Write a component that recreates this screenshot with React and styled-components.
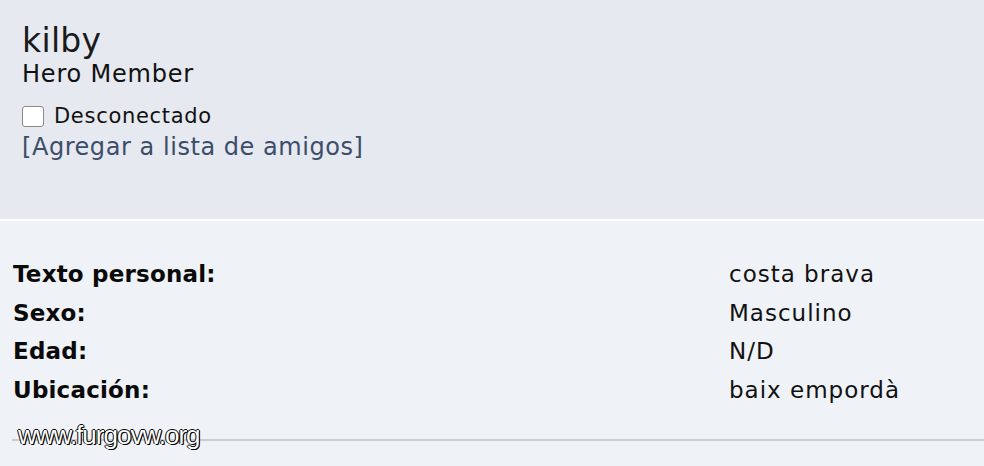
import { Fragment } from "react";
import styled, { createGlobalStyle } from "styled-components";

const GlobalStyle = createGlobalStyle`
	html, body {
		margin: 0;
		padding: 0;
		background: #eff2f6;
	}
	body {
		font-family: "DejaVu Sans", Verdana, sans-serif;
		color: #111;
	}
`;

const Page = styled.div`
	position: relative;
	width: 984px;
	height: 466px;
	overflow: hidden;
	background: #eff2f6;
`;

const TopPanel = styled.div`
	height: 221px;
	box-sizing: border-box;
	padding: 22px 22px 0;
	background: #e6e9ef;
	border-bottom: 2px solid #ffffff;
`;

const Name = styled.div`
	font-size: 33px;
	line-height: 38px;
	letter-spacing: 0.3px;
	color: #1a1a1a;
`;

const Rank = styled.div`
	font-size: 24px;
	line-height: 28px;
	letter-spacing: 0.8px;
	color: #111;
`;

const Status = styled.div`
	display: flex;
	align-items: center;
	gap: 10px;
	margin-top: 16px;
	font-size: 21px;
	line-height: 24px;
	letter-spacing: 0.7px;
`;

const Box = styled.span`
	width: 20px;
	height: 19px;
	border: 1px solid #8a8a8a;
	border-radius: 3px;
	background: #ffffff;
`;

const FriendLink = styled.a`
	display: block;
	margin-top: 5px;
	font-size: 24px;
	line-height: 28px;
	letter-spacing: 0.55px;
	color: #3c4d6b;
	text-decoration: none;
`;

const Details = styled.div`
	display: grid;
	grid-template-columns: 716px 1fr;
	padding: 34px 0 0 13px;
`;

const Label = styled.div`
	font-size: 23px;
	line-height: 38.7px;
	font-weight: bold;
	letter-spacing: 0.2px;
	color: #0a0a0a;
`;

const Value = styled.div`
	font-size: 23px;
	line-height: 38.7px;
	letter-spacing: 1px;
`;

const Rule = styled.div`
	margin: 29px 0 0 12px;
	height: 2px;
	background: #cacdd2;
`;

const Watermark = styled.div`
	position: absolute;
	left: 18px;
	top: 422px;
	font-family: "Liberation Sans Narrow", "Liberation Sans", sans-serif;
	font-size: 26px;
	line-height: 26px;
	letter-spacing: -1px;
	color: #ffffff;
	text-shadow: 1px 1px 0 #000, -1px 0 0 #000, 0 -1px 0 #000, 1px 0 0 #000;
`;

const rows = [
	["Texto personal:", "costa brava"],
	["Sexo:", "Masculino"],
	["Edad:", "N/D"],
	["Ubicación:", "baix empordà"],
];

const App = () => {
	return (
		<Page>
			<GlobalStyle />
			<TopPanel>
				<Name>kilby</Name>
				<Rank>Hero Member</Rank>
				<Status>
					<Box />
					Desconectado
				</Status>
				<FriendLink href="#">[Agregar a lista de amigos]</FriendLink>
			</TopPanel>
			<Details>
				{rows.map(([label, value]) => (
					<Fragment key={label}>
						<Label>{label}</Label>
						<Value>{value}</Value>
					</Fragment>
				))}
			</Details>
			<Rule />
			<Watermark>www.furgovw.org</Watermark>
		</Page>
	);
};

export default App;
